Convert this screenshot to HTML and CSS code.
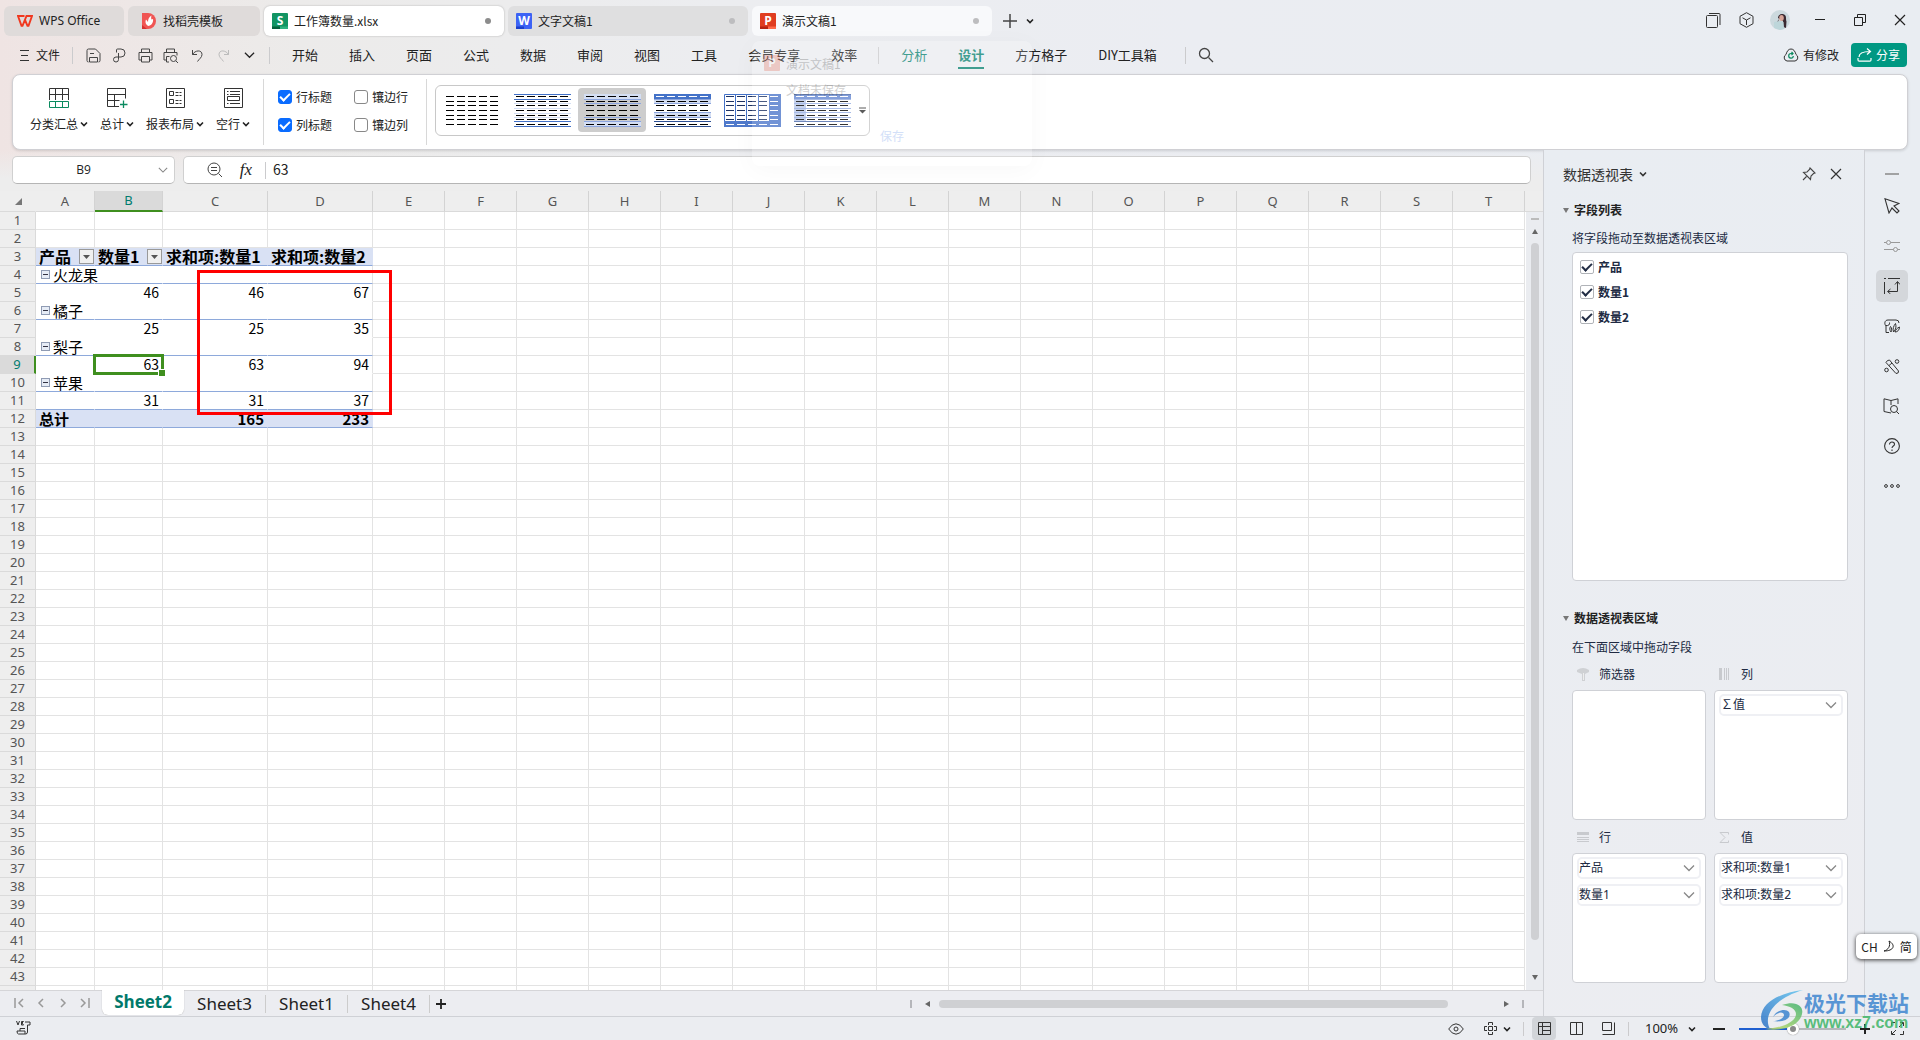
FILE: index.html
```html
<!DOCTYPE html>
<html lang="zh-CN">
<head>
<meta charset="utf-8">
<title>工作簿数量.xlsx - WPS Office</title>
<link rel="stylesheet" href="styles.css">
</head>
<body>
<svg class="sprite" aria-hidden="true">
  <symbol id="chev" viewBox="0 0 8 8"><path d="M1 2.500 4 5.500 7 2.500" fill="none" stroke="currentColor" stroke-width="1.600"/></symbol>
  <symbol id="chev-wide" viewBox="0 0 12 8"><path d="M1 1.500 6 6.500 11 1.500" fill="none" stroke="currentColor" stroke-width="1.300"/></symbol>
  <symbol id="dashes" viewBox="0 0 57 33"><path d="M2 2.500H55M2 7.500H55M2 11.500H55M2 16.500H55M2 21.500H55M2 25.500H55M2 30.500H55" stroke="currentColor" stroke-dasharray="8 3" fill="none"/></symbol>
  <symbol id="close" viewBox="0 0 12 12"><path d="M1 1 11 11M11 1 1 11" stroke="currentColor" stroke-width="1.200" fill="none"/></symbol>
</svg>

<header class="tabs">
  <button class="tab tab-home"><svg width="16" height="12" viewBox="0 0 16 12"><path d="M7.500 1H1l3.500 9.800h1L9.500 1H15l-3.500 9.800h-1L8 5" fill="none" stroke="#f0381f" stroke-width="1.900"/></svg>WPS Office</button>
  <button class="tab tab-store"><svg width="16" height="16" viewBox="0 0 16 16"><path d="M1 0h6a8 8 0 0 1 0 16H1z" fill="#f05553"/><path d="M1 12l5 4H1z" fill="#d6302f"/><path d="M7.500 13C4.500 11.500 4 9 5 6.500l2 2.500c0-3 1-5 3.500-6.500-.5 2-.5 2.500 0 4L12 6c.5 3-1 6-4.500 7z" fill="#fff"/></svg>找稻壳模板</button>
  <button class="tab tab-doc active"><svg width="16" height="16" viewBox="0 0 16 16"><rect width="16" height="16" rx="1" fill="#129463"/><path d="M0 13.500h8V16H0z" fill="#04603c"/><path d="M8 13.500h8V16H8z" fill="#2fb27f"/><text x="8" y="12" class="glyph">S</text></svg><span>工作簿数量.xlsx</span><i class="dot"></i></button>
  <button class="tab tab-doc"><svg width="16" height="16" viewBox="0 0 16 16"><rect width="16" height="16" rx="1" fill="#3d63f5"/><path d="M0 13.500h8V16H0z" fill="#1b3fcb"/><text x="8" y="12" class="glyph">W</text></svg><span>文字文稿1</span><i class="dot dim"></i></button>
  <button class="tab tab-doc hover"><svg width="16" height="16" viewBox="0 0 16 16"><rect width="16" height="16" rx="1" fill="#e03d20"/><path d="M0 13.500h8V16H0z" fill="#b62212"/><path d="M8 13.500h8V16H8z" fill="#ff6b4a"/><text x="8" y="12" class="glyph">P</text></svg><span>演示文稿1</span><i class="dot dim"></i></button>
  <button class="plain add" aria-label="新建"><svg width="14" height="14" viewBox="0 0 14 14"><path d="M7 0v14M0 7h14" stroke="#444" stroke-width="1.500"/></svg></button>
  <button class="plain" aria-label="标签列表"><svg width="8" height="8"><use href="#chev"/></svg></button>
  <div class="window-tools">
    <button class="plain" aria-label="窗口"><svg width="15" height="15" viewBox="0 0 15 15" fill="none" stroke="#333"><rect x=".5" y="2.500" width="11" height="12" rx="1"/><path d="M3 .5h10q1 0 1 1V12"/></svg></button>
    <button class="plain" aria-label="应用"><svg width="15" height="16" viewBox="0 0 15 16" fill="none" stroke="#333"><path d="M7.500.7 14 4.300v7.400l-6.500 3.600L1 11.700V4.300zM3.500 5.800l4 2.200 4-2.200M7.500 8v5"/></svg></button>
    <button class="plain avatar" aria-label="账户"><svg width="20" height="20" viewBox="0 0 20 20"><circle cx="10" cy="10" r="10" fill="#ccd9de"/><path d="M8 8c0-3 3-5 6-3.500 3 1.500 1.500 4 2.500 7L16 18l-2.500-1L13 11z" fill="#3a2a32"/><path d="M9 9c-1 1-2 3-2 4l1 0z" fill="#5b4a50"/><ellipse cx="11.500" cy="8" rx="2.300" ry="3" fill="#d8a598"/><path d="M4 12l6-1 3.500 1 .5 7-4 1-6-2z" fill="#bdd6da"/></svg></button>
    <button class="plain wide" aria-label="最小化"><svg width="10" height="10"><path d="M0 4.500h10" stroke="#222"/></svg></button>
    <button class="plain wide" aria-label="还原"><svg width="12" height="12" viewBox="0 0 12 12" fill="none" stroke="#222"><path d="M.5 3.500h8v8h-8zM3.500 3V.500h8v8H9"/></svg></button>
    <button class="plain wide" aria-label="关闭"><svg width="12" height="12"><use href="#close"/></svg></button>
  </div>
</header>

<nav class="menu">
  <button class="plain file"><svg width="9" height="11" viewBox="0 0 9 11"><path d="M0 .5h9M1 5.500h7M0 10.500h9" stroke="#333"/></svg>文件</button>
  <span class="rule"></span>
  <div class="quick">
    <button class="plain" aria-label="保存"><svg width="15" height="15" viewBox="0 0 15 15" fill="none" stroke="#444"><path d="M2.500 14Q1 14 1 12.500v-10Q1 1 2.500 1H9.500l4.500 4.500v7q0 1.500-1.500 1.500M3.500 14V9.500h8V14zM4 5.500h4"/></svg></button>
    <button class="plain" aria-label="输出为PDF"><svg width="15" height="15" viewBox="0 0 15 15" fill="none" stroke="#444"><path d="M4.500 4.500V2q0-1 1-1h3.500a3.500 3.500 0 0 1 0 8H4a2.500 2.500 0 1 0 2.500 2.500V5"/></svg></button>
    <button class="plain" aria-label="打印"><svg width="15" height="15" viewBox="0 0 15 15" fill="none" stroke="#444"><path d="M3.500 4.500V1h8v3.500M3.500 12H1V4.500h13V12h-2.500M3.500 8.500h8v5.500h-8z"/></svg></button>
    <button class="plain" aria-label="打印预览"><svg width="16" height="15" viewBox="0 0 16 15" fill="none" stroke="#444"><path d="M3.500 4.500V1h8v3.500M3.500 12H1V4.500h13v3M6 14H3.500V8.500h3"/><circle cx="10.500" cy="10.500" r="3"/><path d="M13 13l2 2"/></svg></button>
    <button class="plain" aria-label="撤销"><svg width="13" height="13" viewBox="0 0 13 13" fill="none" stroke="#444"><path d="M1.500 1v4.500H6M1.500 5.500C4 1 11 .5 11 5.500c0 3-3 4.500-4.500 7"/></svg></button>
    <button class="plain" aria-label="恢复"><svg width="13" height="13" viewBox="0 0 13 13" fill="none" stroke="#bbb"><path d="M11.500 1v4.500H7M11.500 5.500C9 1 2 .5 2 5.500c0 3 3 4.500 4.500 7"/></svg></button>
    <button class="plain" aria-label="更多"><svg width="11" height="8"><use href="#chev-wide"/></svg></button>
  </div>
  <span class="rule"></span>
  <div class="menu-items">
    <a href="#">开始</a><a href="#">插入</a><a href="#">页面</a><a href="#">公式</a><a href="#">数据</a><a href="#">审阅</a><a href="#">视图</a><a href="#">工具</a><a href="#">会员专享</a><a href="#">效率</a>
  </div>
  <span class="rule after-menu"></span>
  <div class="menu-items context">
    <a href="#" class="green">分析</a><a href="#" class="green current">设计</a><a href="#">方方格子</a><a href="#">DIY工具箱</a>
  </div>
  <span class="rule before-search"></span>
  <button class="plain search" aria-label="搜索"><svg width="16" height="16" viewBox="0 0 16 16" fill="none" stroke="#444" stroke-width="1.300"><circle cx="6.500" cy="6.500" r="5"/><path d="M10.500 10.500 15 15"/></svg></button>
  <button class="plain cloud"><svg width="16" height="14" viewBox="0 0 16 14" fill="none"><path d="M4 13a3.500 3.500 0 0 1-1-6.500C4 3 5.500 1 8 1s4 2 5 5.500A3.500 3.500 0 0 1 12 13z" stroke="#333"/><path d="M9.500 5.500H8A2.300 2.300 0 1 0 10.300 8M8.500 3.800l1.500 1.700-1.500 1.600" stroke="#0a8a5f" stroke-width="1.200"/></svg>有修改</button>
  <button class="share"><svg width="15" height="14" viewBox="0 0 15 14" fill="none" stroke="#fff" stroke-width="1.200"><path d="M1 10v2q0 1.200 1.200 1.200h10.600q1.200 0 1.200-1.200v-2M2 9C2 5 5 3.500 13 3.500M10 .5l3.500 3-3.500 3"/></svg>分享</button>
</nav>

<section class="ribbon">
  <div class="big-buttons">
    <button class="plain big"><svg width="20" height="20" viewBox="0 0 20 20" fill="none" stroke="#333"><path d="M.5 12V.500h19V12M.5 6.500h19M6.500.500V12M13.500.500V12"/><path d="M.5 13.500h19v6H.500zM6.500 13.500v6M13.500 13.500v6" stroke="#0a8a5f"/></svg><span>分类汇总<svg width="8" height="8"><use href="#chev"/></svg></span></button>
    <button class="plain big"><svg width="21" height="20" viewBox="0 0 21 20" fill="none" stroke="#333"><path d="M18.500 10.500V.500H.500v18H12M.5 6.500h18M7.500 6.500v12M.5 12.500h12"/><path d="M16.500 12.500v7.500M13 16.500h7.500" stroke="#0a8a5f" stroke-width="1.300"/></svg><span>总计<svg width="8" height="8"><use href="#chev"/></svg></span></button>
    <button class="plain big"><svg width="19" height="20" viewBox="0 0 19 20" fill="none" stroke="#333"><path d="M.5.500h18v19H.500zM3.500 3.500h4v4h-4zM3.500 11.500h4v4h-4z"/><path d="M9.500 4.500h6M9.500 7.500h6M9.500 12.500h6M9.500 15.500h6" stroke-dasharray="3 1"/></svg><span>报表布局<svg width="8" height="8"><use href="#chev"/></svg></span></button>
    <button class="plain big"><svg width="19" height="20" viewBox="0 0 19 20" fill="none" stroke="#333"><path d="M.5.500h18v19H.500zM3.500 8.500h12v4h-12zM6 3.500h10M6 6.500h10M6 15.500h10M3 3.500h1.500M3 6.500h1.500M3 15.500h1.500"/></svg><span>空行<svg width="8" height="8"><use href="#chev"/></svg></span></button>
  </div>
  <div class="options">
    <label><input type="checkbox" class="blue" checked>行标题</label><label><input type="checkbox" class="blue">镶边行</label>
    <label><input type="checkbox" class="blue" checked>列标题</label><label><input type="checkbox" class="blue">镶边列</label>
  </div>
  <div class="gallery">
    <button class="style" aria-label="样式 1"><svg width="57" height="33"><use href="#dashes"/></svg></button>
    <button class="style" aria-label="样式 2"><svg width="57" height="33"><path d="M0 9.500h57M0 14.500h57M0 19.500h57M0 23.500h57" stroke="#d3def3"/><path d="M0 .5h57M0 5.500h57M0 27.500h57M0 32.500h57" stroke="#4270c6"/><use href="#dashes"/></svg></button>
    <button class="style chosen" aria-label="样式 3"><svg width="57" height="33"><path d="M0 0h57v5H0zM0 28h57v5H0z" fill="#d4def2"/><path d="M0 5.500h57M0 9.500h57M0 23.500h57M0 27.500h57M0 32.500h57" stroke="#8ca5de"/><use href="#dashes"/></svg></button>
    <button class="style" aria-label="样式 4"><svg width="57" height="33"><path d="M0 0h57v5H0z" fill="#4472c8"/><path d="M0 6h57v3H0zM0 19h57v4H0z" fill="#d4def2"/><path d="M0 5.500h57M0 9.500h57M0 18.500h57M0 23.500h57" stroke="#8ca5de"/><path d="M0 27.500h57M0 32.500h57" stroke="#2d4f93"/><use href="#dashes"/><path d="M2 2.500h53" stroke="#fff" stroke-dasharray="8 3"/></svg></button>
    <button class="style" aria-label="样式 5"><svg width="57" height="33"><path d="M.5.500h56v32H.500zM11.500 0v28M22.500 0v28M34.500 0v28" fill="none" stroke="#4472c8"/><path d="M45 0h12v33H0v-6h45z" fill="#4f79cb"/><g color="#1d3263"><use href="#dashes"/></g><path d="M2 30.500h53M46 2.500h8M46 7.500h8M46 11.500h8M46 16.500h8M46 21.500h8M46 25.500h8" stroke="#fff" stroke-dasharray="8 3"/></svg></button>
    <button class="style" aria-label="样式 6"><svg width="57" height="33"><path d="M0 6h12v22H0z" fill="#b9c9ea"/><path d="M0 0h57v5H0z" fill="#6488d2"/><path d="M0 5.500h57M0 9.500h57M0 14.500h57M0 18.500h57M0 23.500h57" stroke="#93abe0"/><path d="M0 .5h57M0 27.500h57M0 32.500h57" stroke="#4a68a8"/><use href="#dashes"/><path d="M2 2.500h53" stroke="#fff" stroke-dasharray="8 3"/></svg></button>
    <button class="plain more" aria-label="更多样式"><svg width="7" height="7"><path d="M0 1h7" stroke="#333"/><path d="M0 3h7L3.500 6.500z" fill="#333"/></svg></button>
  </div>
</section>

<main class="work">
  <section class="book">
    <div class="formula-row">
      <div class="name-box"><input value="B9" aria-label="名称框"><svg width="10" height="8" viewBox="0 0 12 8"><use href="#chev-wide"/></svg></div>
      <div class="formula-box">
        <button class="plain" aria-label="浏览公式"><svg width="16" height="16" viewBox="0 0 16 16" fill="none" stroke="#444"><circle cx="7" cy="7" r="6"/><path d="M4 5.500h6M4 8.500h6M11.500 11.500 15 15"/></svg></button>
        <button class="plain fx">fx</button>
        <span class="rule"></span>
        <input value="63" aria-label="编辑栏">
      </div>
    </div>
    <div class="grid-row">
      <div class="grid">
        <table id="sheet"></table>
        <div class="callout"></div>
      </div>
      <div class="vscroll">
        <i class="split"></i>
        <svg width="6" height="5"><path d="M3 0l3 5H0z" fill="#666"/></svg>
        <i class="thumb"></i>
        <svg width="6" height="5"><path d="M3 5l3-5H0z" fill="#666"/></svg>
      </div>
    </div>
    <div class="sheet-bar">
      <div class="sheet-nav">
        <button class="plain" aria-label="第一个"><svg width="10" height="10" fill="none" stroke="#999" stroke-width="1.500"><path d="M1 0v10M9 1 5 5l4 4"/></svg></button>
        <button class="plain" aria-label="上一个"><svg width="10" height="10" fill="none" stroke="#999" stroke-width="1.500"><path d="M7 1 3 5l4 4"/></svg></button>
        <button class="plain" aria-label="下一个"><svg width="10" height="10" fill="none" stroke="#999" stroke-width="1.500"><path d="M3 1l4 4-4 4"/></svg></button>
        <button class="plain" aria-label="最后一个"><svg width="10" height="10" fill="none" stroke="#999" stroke-width="1.500"><path d="M9 0v10M1 1l4 4-4 4"/></svg></button>
      </div>
      <button class="sheet-tab on">Sheet2</button><button class="sheet-tab">Sheet3</button><button class="sheet-tab">Sheet1</button><button class="sheet-tab">Sheet4</button>
      <button class="plain new-sheet" aria-label="新建工作表"><svg width="10" height="10"><path d="M5 0v10M0 5h10" stroke="#222" stroke-width="1.800"/></svg></button>
      <div class="hscroll">
        <i class="tick"></i>
        <svg width="5" height="6"><path d="M0 3l5-3v6z" fill="#666"/></svg>
        <i class="track"><i class="thumb"></i></i>
        <svg width="5" height="6"><path d="M5 3L0 0v6z" fill="#666"/></svg>
        <i class="tick"></i>
      </div>
    </div>
  </section>

  <aside class="pane">
    <div class="pane-title"><h2>数据透视表</h2><svg width="8" height="8"><use href="#chev"/></svg>
      <button class="plain pin" aria-label="固定"><svg width="14" height="14" viewBox="0 0 14 14" fill="none" stroke="#444" stroke-width="1.100"><path d="M8 1l5 5-1.500.5L9 9l-.5 3.500-7-7L5 5l2.500-2.500zM4.500 9.500 1 13"/></svg></button>
      <button class="plain" aria-label="关闭窗格"><svg width="12" height="12"><use href="#close"/></svg></button>
    </div>
    <h3 class="first"><svg width="6" height="5"><path d="M0 0h6L3 5z" fill="#777"/></svg>字段列表</h3>
    <p class="near">将字段拖动至数据透视表区域</p>
    <div class="field-list">
      <label><input type="checkbox" class="line" checked>产品</label>
      <label><input type="checkbox" class="line" checked>数量1</label>
      <label><input type="checkbox" class="line" checked>数量2</label>
    </div>
    <h3 class="second"><svg width="6" height="5"><path d="M0 0h6L3 5z" fill="#777"/></svg>数据透视表区域</h3>
    <p>在下面区域中拖动字段</p>
    <div class="areas">
      <div class="area"><h4><svg width="12" height="13"><path d="M0 2Q6-2 12 2v2L8 6v7H5V6L0 4z" fill="#cfd1d4"/><path d="M6.500 5v7" stroke="#eee"/></svg>筛选器</h4><div class="drop"></div></div>
      <div class="area"><h4><svg width="12" height="12"><path d="M0 0h3v12H0zM5 0h1v12H5zM7 0h1v12H7zM9 0h1v12H9z" fill="#c8cace"/></svg>列</h4><div class="drop">
        <label class="chip"><select aria-label="∑值"><option>∑值</option></select><svg width="12" height="8"><use href="#chev-wide"/></svg></label></div></div>
      <div class="area"><h4><svg width="12" height="11"><path d="M0 0h12v3H0zM0 5h12v1H0zM0 7h12v1H0zM0 9h12v1H0z" fill="#c8cace"/></svg>行</h4><div class="drop">
        <label class="chip"><select aria-label="产品"><option>产品</option></select><svg width="12" height="8"><use href="#chev-wide"/></svg></label>
        <label class="chip"><select aria-label="数量1"><option>数量1</option></select><svg width="12" height="8"><use href="#chev-wide"/></svg></label></div></div>
      <div class="area"><h4><svg width="12" height="11" fill="none" stroke="#c8cace"><path d="M9.500 2.500V.500H1L6 5.500 1 10.500h8.500v-2"/></svg>值</h4><div class="drop">
        <label class="chip"><select aria-label="求和项:数量1"><option>求和项:数量1</option></select><svg width="12" height="8"><use href="#chev-wide"/></svg></label>
        <label class="chip"><select aria-label="求和项:数量2"><option>求和项:数量2</option></select><svg width="12" height="8"><use href="#chev-wide"/></svg></label></div></div>
    </div>
  </aside>

  <aside class="rail">
    <button class="plain slim" aria-label="收起"><svg width="14" height="2"><path d="M0 1h14" stroke="#888" stroke-width="1.500"/></svg></button>
    <button class="plain" aria-label="选择"><svg width="16" height="16" viewBox="0 0 16 16" fill="none" stroke="#333" stroke-width="1.100"><path d="M1 .8l14 4.700-5 2.500 5 5-2 2-5-5L5 15z"/></svg></button>
    <button class="plain" aria-label="属性"><svg width="16" height="14" viewBox="0 0 16 14" fill="none" stroke="#999"><path d="M0 3.500h2.500M6.500 3.500H16M0 10.500h9.500M13.500 10.500H16"/><circle cx="4.500" cy="3.500" r="2"/><circle cx="11.500" cy="10.500" r="2"/></svg></button>
    <button class="plain on" aria-label="数据透视表"><svg width="16" height="16" viewBox="0 0 16 16" fill="none" stroke="#333"><path d="M.5 4v12M4 .5h12M0 .5h2M4 13.500h9.500V4M11 6.500l2.500-3 2.500 3M6.500 11 3.500 13.500l3 2.500"/></svg></button>
    <button class="plain" aria-label="稻壳资源"><svg width="16" height="15" viewBox="0 0 16 15" fill="none" stroke="#333"><path d="M5 13.500H2V7C0 5 .5 1 4 1h8q3 0 3 3M2 6.500c2.500.5 4-1 3.500-3"/><path d="M7 13c-1.500-2-1.500-4-.5-5.500C8 9 8 11 7 13zM9.500 13c-1-3 0-6 2-8.500 1 3 .5 6-2 8.500zM11 13c.5-2 2-4 4.500-5 0 3-2 5-4.500 5z"/></svg></button>
    <button class="plain" aria-label="智能工具"><svg width="16" height="15" viewBox="0 0 16 15" fill="none" stroke="#333"><path d="M2 3.500q1-2.500 3.500-2.500l9 11q.5 2.500-2.500 2.500zM5 6.500 8 4"/><circle cx="13" cy="2.500" r="1.800"/><circle cx="2.500" cy="11" r="1.800"/></svg></button>
    <button class="plain" aria-label="查找"><svg width="17" height="16" viewBox="0 0 17 16" fill="none" stroke="#333"><path d="M8 15 1 13.500V.800L8 2.500 15 .8V6M8 2.500V7"/><circle cx="11" cy="11" r="3.500"/><path d="M13.500 13.500l2.500 2.500"/></svg></button>
    <button class="plain" aria-label="帮助"><svg width="16" height="16" viewBox="0 0 16 16" fill="none" stroke="#333" stroke-width="1.100"><circle cx="8" cy="8" r="7.400"/><path d="M5.500 6.500c0-3.500 5-3 5-.3C10.500 8 8 8 8 10M8 11.500V13"/></svg></button>
    <button class="plain" aria-label="更多"><svg width="16" height="4" fill="none" stroke="#333"><circle cx="2" cy="2" r="1.400"/><circle cx="8" cy="2" r="1.400"/><circle cx="14" cy="2" r="1.400"/></svg></button>
  </aside>
</main>

<footer class="status">
  <button class="plain vb" aria-label="宏"><svg width="15" height="14" viewBox="0 0 15 14" fill="none" stroke="#333"><path d="M.5 0 2 4 3.500 0M5.500.500h2L6 2l1.500 2h-2zM9 1h5v3h-2.500V11q0 2-2 2H2.500q-1.500 0-1.500-3h8v3M4 10V7.500h5"/></svg></button>
  <div class="status-right">
    <button class="plain eye" aria-label="护眼"><svg width="16" height="12" viewBox="0 0 16 12" fill="none" stroke="#333"><path d="M.7 6Q4 .8 8 .8T15.300 6Q12 11.200 8 11.200T.7 6z"/><circle cx="8" cy="6" r="2"/></svg></button>
    <button class="plain target" aria-label="阅读模式"><svg width="13" height="13" viewBox="0 0 13 13" fill="none" stroke="#333"><path d="M4.500 3V.500h4V3M4.500 10v2.500h4V10M3 4.500H.500v4H3M10 4.500h2.500v4H10M4.500 4.500h4v4h-4z"/></svg><svg width="8" height="8"><use href="#chev"/></svg></button>
    <span class="rule"></span>
    <button class="plain view on" aria-label="普通视图"><svg width="13" height="13" fill="none" stroke="#333"><path d="M.5.500h12v12H.500zM.5 4.500h12M4.500.500v12M4.500 8.500h8"/></svg></button>
    <button class="plain view" aria-label="分页预览"><svg width="13" height="13" fill="none" stroke="#333"><path d="M.5.500h12v12H.500zM6.500.500v12"/></svg></button>
    <button class="plain view" aria-label="页面布局"><svg width="13" height="13" fill="none" stroke="#333"><path d="M.5.500h9v8h-9zM12.500.500v12H.500"/></svg></button>
    <span class="rule after-views"></span>
    <label class="zoom"><select aria-label="缩放比例"><option>100%</option></select><svg width="8" height="8"><use href="#chev"/></svg></label>
    <button class="plain" aria-label="缩小"><svg width="12" height="12"><path d="M0 6h12" stroke="#222" stroke-width="2"/></svg></button>
    <input type="range" min="0" max="100" value="50" aria-label="缩放">
    <button class="plain" aria-label="放大"><svg width="10" height="12"><path d="M0 6h10M5 1v10" stroke="#222" stroke-width="2"/></svg></button>
    <button class="plain full" aria-label="全屏"><svg width="13" height="13" fill="none" stroke="#333"><path d="M.5 4V.500H4M9 .500h3.500V4M12.500 9v3.500H9M4 12.500H.500V9M8 5l4-4M5 8l-4 4"/></svg></button>
  </div>
</footer>

<div class="preview">
  <div class="preview-head"><svg width="16" height="16" viewBox="0 0 16 16"><rect width="16" height="16" rx="1" fill="#e03d20"/><text x="8" y="12" class="glyph">P</text></svg><div><strong>演示文稿1</strong><span>文档未保存</span></div></div>
  <button class="plain">保存</button>
</div>

<div class="ime">CH <svg width="12" height="13" fill="none" stroke="#222"><path d="M6 1c7 4 5 10-5 10 4-1 7-5 5-10z"/></svg> 简</div>

<div class="brand">
  <svg width="44" height="42" viewBox="0 0 44 42"><defs><linearGradient id="b" x1="0" y1="1" x2="1" y2="0"><stop offset="0" stop-color="#2b6fc4"/><stop offset="1" stop-color="#63c6f0"/></linearGradient><linearGradient id="g" x1="0" y1="1" x2="1" y2="0"><stop offset="0" stop-color="#cfe069"/><stop offset="1" stop-color="#3fb270"/></linearGradient></defs><path d="M43 0C20 3 2 12 1 27c0 7 4 11 9 12C3 26 13 9 43 0z" fill="url(#b)"/><path d="M22 15c14-5 22 1 20 9C40 34 26 42 5 39c17-1 31-7 31-15 0-5-6-8-14-9z" fill="url(#g)"/><path d="M13 31c11 2 19-3 16-9-3-4-13-2-16 5 5-6 11-5 11-2s-5 6-11 6z" fill="#3d85cf"/></svg>
  <div><b>极光下载站</b><span>www.xz7.com</span></div>
</div>
<script src="sheet.js"></script>
</body>
</html>
```
FILE: styles.css
```css
* { box-sizing: border-box; }
html, body { height: 100%; }
body {
  margin: 0;
  display: flex;
  flex-direction: column;
  overflow: hidden;
  position: relative;
  color: #222;
  font: 12px/20px "Noto Sans CJK SC", sans-serif;
  background: linear-gradient(90deg, #efe4e3 0, #ecebea 300px, #ecedf0 720px, #ebedf2 1200px, #e9edf2 100%);
}
button, input, select { font: inherit; color: inherit; margin: 0; }
h2, h3, h4, p { margin: 0; font-size: 12px; }
svg { flex: none; display: block; }
i { display: block; }
.sprite { position: absolute; width: 0; height: 0; }
.glyph { font: bold 12px "Open Sans", sans-serif; fill: #fff; text-anchor: middle; }
.plain { border: 0; padding: 0; background: none; display: flex; align-items: center; justify-content: center; }
.rule { width: 1px; height: 17px; background: #cbcbcd; flex: none; }

/* window tabs */
.tabs { display: flex; align-items: center; gap: 4px; height: 36px; padding: 6px 4px 0; flex: none; }
.tab { display: flex; align-items: center; gap: 6px; height: 30px; border: 0; border-radius: 6px; padding: 0 13px; background: #dfdbda; white-space: nowrap; }
.tab-home { width: 120px; font-family: "Noto Sans", sans-serif; }
.tab-store { width: 132px; }
.tab-doc { width: 240px; padding: 0 13px 0 8px; background: #dfdfe0; }
.tab-doc.active { background: #fff; box-shadow: 0 0 2px #aaa; }
.tab-doc.hover { background: #f8f9fb; }
.dot { width: 6px; height: 6px; border-radius: 50%; background: #8c8c8c; margin-left: auto; }
.dot.dim { background: #bdbdbf; }
.tabs .add { margin: 0 5px 0 7px; }
.window-tools { margin-left: auto; display: flex; align-items: center; padding-bottom: 2px; }
.window-tools .plain { width: 33px; }
.window-tools .avatar { margin-right: 4px; }
.window-tools .wide { width: 40px; }
.window-tools .plain:last-child { margin-right: -4px; }

/* menu */
.menu { display: flex; align-items: center; height: 38px; padding: 0 13px 0 20px; flex: none; }
.file { gap: 7px; width: 52px; justify-content: flex-start; }
.quick { display: flex; padding: 0 7px; }
.quick .plain { width: 26px; height: 24px; }
.quick + .rule, .after-menu { margin-right: 22px; }
.after-menu { margin-left: 21px; }
.before-search { margin: 0 12px 0 28px; }
.menu-items { display: flex; gap: 31px; font-size: 13px; }
.menu-items a { color: inherit; text-decoration: none; height: 28px; line-height: 28px; white-space: nowrap; }
.menu-items .green { color: #128675; }
.menu-items .current { font-weight: bold; border-bottom: 2px solid #128675; }
.cloud { margin-left: auto; gap: 4px; margin-right: 12px; }
.share { display: flex; align-items: center; gap: 4px; width: 56px; height: 24px; border: 0; border-radius: 4px; background: #009882; color: #fff; padding: 0 6px; }

/* ribbon */
.ribbon { display: flex; align-items: center; flex: none; height: 76px; margin: 0 12px; border: 1px solid #d0d0d4; border-radius: 8px; background: #fff; box-shadow: 0 1px 3px #0002; }
.big-buttons { display: flex; gap: 12px; padding: 0 13px 2px 17px; height: 66px; border-right: 1px solid #d8d8d8; }
.big { flex-direction: column; gap: 6px; }
.big span { display: flex; align-items: center; gap: 2px; }
.options { display: grid; grid-template-columns: 76px 72px; row-gap: 8px; align-content: center; padding: 0 0 3px 14px; height: 66px; border-right: 1px solid #d8d8d8; }
.options label { display: flex; align-items: center; gap: 4px; }
.blue, .line { appearance: none; width: 14px; height: 14px; border: 1px solid #888; border-radius: 3px; background: #fff; display: grid; place-items: center; flex: none; }
.blue:checked { background: #0a6cff; border-color: #0a6cff; }
.blue:checked::before, .line:checked::before { content: ""; width: 4px; height: 8px; border: solid #fff; border-width: 0 2px 2px 0; rotate: 45deg; translate: 0 -1px; }
.line { border-color: #b0b3b8; border-radius: 2px; }
.line:checked::before { border-color: #222d45; }
.gallery { display: flex; align-items: center; gap: 2px; height: 51px; margin: 0 0 4px 8px; padding: 0 2px; border: 1px solid #c8c8c8; border-radius: 6px; }
.style { border: 0; padding: 0; background: none; color: #000; width: 68px; height: 44px; display: grid; place-items: center; border-radius: 4px; }
.chosen { background: #cdcdcd; }
.more { width: 9px; }

/* workbook */
.work { flex: 1; display: flex; min-height: 0; }
.book { flex: 1; min-width: 0; display: flex; flex-direction: column; }
.formula-row { display: flex; gap: 8px; flex: none; padding: 6px 12px 7px; background: linear-gradient(#ededed00, #ededed 70%); }
.name-box, .formula-box { display: flex; align-items: center; height: 28px; border: 1px solid #d0d0d0; border-bottom-color: #b5b5b5; border-radius: 5px; background: #fff; }
.name-box { width: 163px; padding-right: 6px; color: #888; }
.name-box input { flex: 1; min-width: 0; border: 0; padding: 0 4px 0 0; text-align: center; color: #222; background: none; font-family: "Open Sans", sans-serif; }
.formula-box { flex: 1; padding-left: 23px; }
.formula-box input { flex: 1; border: 0; padding: 0 7px 2px; font-size: 14px; background: none; }
.fx { width: 16px; margin: 0 11px 0 15px; font: italic 17px/20px "Liberation Serif", serif; }
.grid-row { flex: 1; display: flex; min-height: 0; }
.grid { flex: 1; position: relative; overflow: hidden; background: linear-gradient(#eee 20px, #dadada 20px, #dadada 21px, #fff 21px); }
table { table-layout: fixed; width: 1525px; border-collapse: separate; border-spacing: 0; color: #000; }
.c-row { width: 36px; } .c-a { width: 59px; } .c-b { width: 68px; } .c-sum { width: 105px; } .c-std { width: 72px; }
th { background: #eee; color: #555; font: 13px/17px "Noto Sans", sans-serif; padding: 0; height: 18px; border: solid #dadada; border-width: 0 1px 1px 0; }
thead th { height: 21px; border-right-color: #d3d3d3; }
thead th:first-child { border-right-color: #eee; border-bottom-color: #dadada; }
thead th.on { background: #dadada; color: #007c6f; border-bottom: 2px solid #3f8f1f; }
tbody th.on { background: #dadada; color: #007c6f; border-right: 2px solid #3f8f1f; }
.corner { margin: 0 0 0 15px; }
td { height: 18px; padding: 0 3px; font-size: 14px; line-height: 17px; white-space: nowrap; border: solid #e3e3e3; border-width: 0 1px 1px 0; }
td.p { border-color: #fff; }
td.p.end { border-right-color: #e3e3e3; }
td.p.line-b { border-bottom-color: #8ea9db; }
td.p.band { background: #d9e1f4; border-right-color: #d9e1f4; font-weight: bold; font-size: 15px; }
td.p.head { font-size: 16px; }
td.num { text-align: right; }
td.item { font-size: 15px; }
.cell { display: flex; align-items: center; height: 17px; gap: 3px; }
.filter { margin: 0 -3px 0 auto; width: 15px; height: 15px; border: 1px solid #999; background: #f0f0f0; padding: 0; display: grid; place-items: center; }
.fold { width: 9px; height: 9px; margin-left: 2px; border: 1px solid #8f9bb3; background: #e6ecf6; padding: 0; display: grid; place-items: center; flex: none; }
td.picked { position: relative; }
.cursor { position: absolute; inset: -2px; border: 3px solid #3f8f1f; }
.cursor::after { content: ""; position: absolute; right: -4px; bottom: -4px; width: 6px; height: 6px; background: #3f8f1f; outline: 1px solid #fff; }
.callout { position: absolute; left: 197px; top: 79px; width: 195px; height: 145px; border: 3px solid #f00; }
.vscroll { width: 17px; flex: none; display: flex; flex-direction: column; align-items: center; padding: 27px 0 10px; gap: 9px; background: linear-gradient(#eee 20px, #dadada 20px, #dadada 21px, #eaecf0 21px); }
.vscroll .split { width: 8px; height: 2px; background: #bbb; }
.vscroll .thumb { flex: 1; width: 8px; border-radius: 4px; background: #cfd0d3; margin-bottom: 26px; }

/* sheet tabs */
.sheet-bar { display: flex; align-items: center; height: 26px; flex: none; border-top: 1px solid #d5d5d8; background: #ecedf1; }
.sheet-nav { display: flex; width: 102px; padding: 0 0 1px 8px; }
.sheet-nav .plain { width: 22px; }
.sheet-tab { border: 0; background: none; padding: 0; width: 82px; font: 17px/18px "Noto Sans", sans-serif; border-right: 1px solid #ccc; height: 18px; padding-bottom: 4px; display: grid; place-items: center; }
.sheet-tab.on { background: #fff; border: 0; border-radius: 0 0 6px 6px; height: 25px; align-self: flex-start; margin-top: -1px; font-weight: 700; color: #00796b; font-family: "Open Sans", sans-serif; box-shadow: 0 0 1px #999; clip-path: inset(0 -1px -2px -1px); padding-bottom: 1px; }
.new-sheet { width: 22px; }
.hscroll { margin-left: auto; width: 634px; padding: 0 19px 0 1px; display: flex; align-items: center; }
.hscroll .tick { width: 2px; height: 8px; background: #b5b6ba; }
.hscroll > svg:nth-of-type(1) { margin: 0 9px 0 13px; }
.hscroll > svg:nth-of-type(2) { margin-right: 13px; }
.track { flex: 1; height: 8px; }
.track .thumb { width: 90%; height: 8px; border-radius: 4px; background: #cfd0d3; }

/* pivot pane */
.pane { width: 321px; flex: none; border-left: 1px solid #cfd1d6; display: flex; flex-direction: column; padding: 9px 16px 33px 28px; color: #202a42; background: linear-gradient(160deg, #e9edf2, #ecedf1); }
.pane-title { display: flex; align-items: center; height: 30px; margin-left: -9px; color: #333; }
.pane-title h2 { font-size: 14px; font-weight: normal; margin-right: 6px; }
.pin { margin: 0 14px 0 auto; }
.pane-title .plain:last-child { margin-right: 6px; }
.pane h3 { display: flex; align-items: center; gap: 5px; margin-left: -9px; height: 20px; color: #222; }
.first { margin-top: 11px; }
.pane p { margin-top: 9px; height: 20px; flex: none; }
.pane p.near { margin-top: 8px; }
.second { margin-top: 27px; }
.field-list, .drop { background: #fff; border: 1px solid #cfd1d6; border-radius: 4px; }
.field-list { flex: 1; margin-top: 4px; padding: 2px 7px; font-weight: bold; }
.field-list label { display: flex; align-items: center; gap: 4px; height: 25px; padding-bottom: 2px; }
.areas { display: grid; grid-template-columns: 1fr 1fr; gap: 7px 8px; margin-top: 7px; }
.area h4 { display: flex; align-items: center; gap: 10px; padding-left: 5px; height: 20px; font-weight: normal; margin-bottom: 6px; }
.drop { height: 130px; padding: 3px 4px; display: flex; flex-direction: column; gap: 5px; }
.chip { display: flex; align-items: center; height: 22px; border: 2px solid #eff0f4; border-radius: 5px; padding-right: 4px; color: #888; }
.chip select { flex: 1; min-width: 0; appearance: none; border: 0; background: none; color: #202a42; height: 20px; padding: 0 0 1px; font-family: "Noto Sans", "Noto Sans CJK SC", sans-serif; }

/* right rail */
.rail { width: 56px; flex: none; border-left: 1px solid #cfd1d6; display: flex; flex-direction: column; align-items: center; gap: 8px; padding: 16px 2px 0 0; }
.rail .plain { width: 32px; height: 32px; border-radius: 5px; }
.rail .slim { height: 16px; }
.rail .on { background: #d4d7db; }

/* status bar */
.status { height: 24px; flex: none; border-top: 1px solid #cfd1d6; display: flex; align-items: center; padding: 0 16px; background: #ebedf1; }
.status-right { margin-left: auto; display: flex; align-items: center; height: 23px; }
.vb { padding-bottom: 2px; }
.eye { margin-right: 20px; }
.target { gap: 6px; margin-right: 12px; }
.status .rule { height: 14px; margin-right: 8px; }
.view { width: 24px; height: 23px; margin-right: 8px; border-radius: 4px; }
.view.on { background: #d2d5d9; }
.status .after-views { margin-right: 16px; }
.zoom { display: flex; align-items: center; width: 68px; }
.zoom select { appearance: none; border: 0; background: none; padding: 0 0 2px; width: 43px; font: 13px/20px "Noto Sans", sans-serif; }
input[type=range] { appearance: none; width: 107px; height: 12px; margin: 0 14px; background: linear-gradient(90deg, #1f5fd0 50%, #b5b7bb 50%) center/100% 2px no-repeat; }
input[type=range]::-webkit-slider-thumb { appearance: none; width: 12px; height: 12px; border-radius: 50%; background: #888; border: 3px solid #fff; box-shadow: 0 0 1px #666; }
.full { margin-left: 21px; }

/* fading tab preview */
.preview { position: absolute; left: 752px; top: 41px; width: 280px; height: 125px; border-radius: 8px; background: #ffffff33; box-shadow: 0 4px 24px #00000008; padding: 13px 12px; pointer-events: none; }
.preview-head { display: flex; gap: 6px; opacity: .22; }
.preview-head svg { margin-top: 1px; }
.preview-head strong, .preview-head span { display: block; font-weight: normal; height: 26px; }
.preview .plain { color: #d3e0f8; margin: 20px 0 0 116px; }

/* input method badge */
.ime { position: absolute; right: 3px; bottom: 81px; width: 61px; height: 25px; display: flex; align-items: center; justify-content: center; gap: 5px; border-radius: 5px; background: #fff; box-shadow: 0 1px 4px #333; white-space: nowrap; }

/* site mark */
.brand { position: absolute; right: 11px; bottom: 8px; display: flex; align-items: center; opacity: .85; pointer-events: none; }
.brand b { display: block; font-size: 21px; line-height: 24px; color: #3f86cf; }
.brand span { display: block; font: bold 16px/18px "Liberation Sans", sans-serif; color: #3fb568; }
```
FILE: sheet.js
```js
const letters = "ABCDEFGHIJKLMNOPQRST".split("");
const ROWS = 43;
const selected = { row: 9, col: "B" };

const filter = '<button class="filter" aria-label="筛选"><svg width="7" height="4"><path d="M0 0h7L3.500 4z" fill="#555"/></svg></button>';
const fold = '<button class="fold" aria-label="折叠"><svg width="5" height="1"><path d="M0 .500h5" stroke="#334"/></svg></button>';
const pivot = {
  3: ["产品", "数量1", "求和项:数量1", "求和项:数量2"],
  4: ["火龙果"],
  5: ["", 46, 46, 67],
  6: ["橘子"],
  7: ["", 25, 25, 35],
  8: ["梨子"],
  9: ["", 63, 63, 94],
  10: ["苹果"],
  11: ["", 31, 31, 37],
  12: ["总计", "", 165, 233]
};
const ruled = [3, 4, 6, 8, 10, 11, 12];

function cell(row, i) {
  const data = pivot[row];
  if (!data || i > 3) return "<td></td>";
  const value = data[i] === undefined ? "" : data[i];
  const cls = ["p"];
  let body = value;
  if (i === 3) cls.push("end");
  if (ruled.includes(row)) cls.push("line-b");
  if (row === 3 || row === 12) cls.push("band");
  if (row === 3) {
    cls.push("head");
    if (i < 2) body = `<div class="cell">${value}${filter}</div>`;
  }
  if (typeof value === "number") cls.push("num");
  else if (value && row > 3 && row < 12) {
    cls.push("item");
    body = `<div class="cell">${fold}${value}</div>`;
  }
  if (row === selected.row && letters[i] === selected.col) {
    cls.push("picked");
    body += '<div class="cursor"></div>';
  }
  return `<td class="${cls.join(" ")}">${body}</td>`;
}

const widths = ["c-row", "c-a", "c-b", "c-sum", "c-sum"];
let html = "<colgroup>" + [0, ...letters].map((_, i) => `<col class="${widths[i] || "c-std"}">`).join("") + "</colgroup>";
html += '<thead><tr><th><svg class="corner" width="7" height="7"><path d="M7 0v7H0z" fill="#777"/></svg></th>';
html += letters.map(l => `<th${l === selected.col ? ' class="on"' : ""}>${l}</th>`).join("") + "</tr></thead><tbody>";
for (let r = 1; r <= ROWS; r++) {
  html += `<tr><th${r === selected.row ? ' class="on"' : ""}>${r}</th>${letters.map((_, i) => cell(r, i)).join("")}</tr>`;
}
html += `<tr><th></th>${letters.map(() => "<td></td>").join("")}</tr>`;
document.getElementById("sheet").innerHTML = html + "</tbody>";
```
